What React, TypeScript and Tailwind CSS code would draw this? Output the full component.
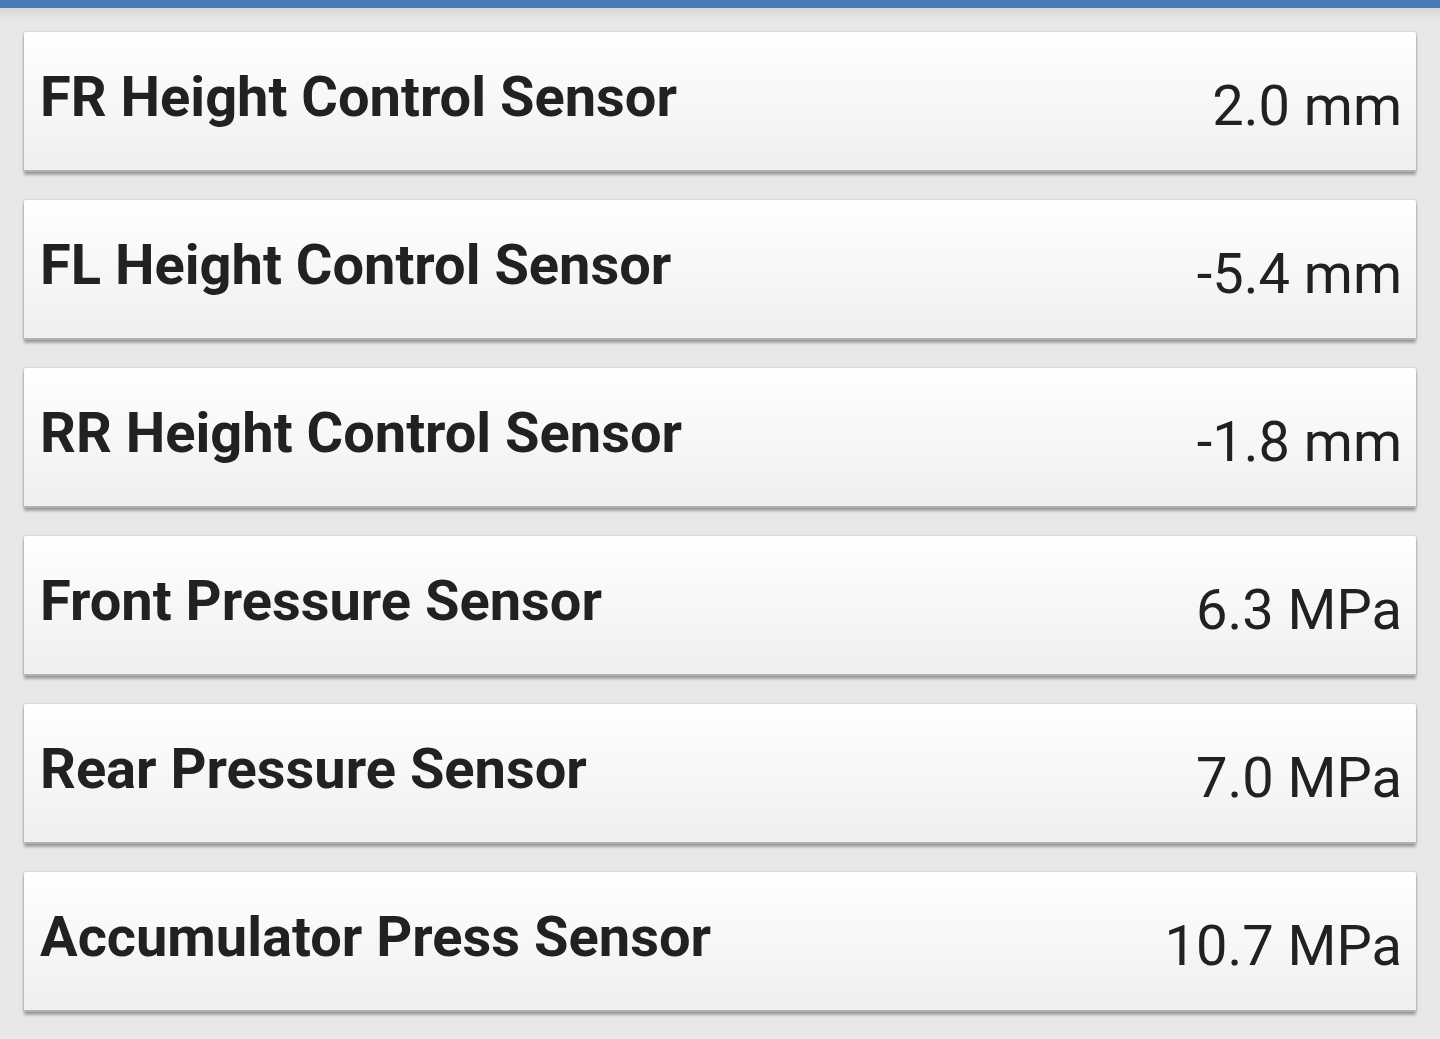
const rows = [
  { label: "FR Height Control Sensor", value: "2.0 mm" },
  { label: "FL Height Control Sensor", value: "-5.4 mm" },
  { label: "RR Height Control Sensor", value: "-1.8 mm" },
  { label: "Front Pressure Sensor", value: "6.3 MPa" },
  { label: "Rear Pressure Sensor", value: "7.0 MPa" },
  { label: "Accumulator Press Sensor", value: "10.7 MPa" },
];

export default function App() {
  return (
    <div className="w-[1440px] h-[1039px] overflow-hidden bg-[#e8e8e8] font-['Roboto',sans-serif]">
      <div className="h-2 bg-[#4a7bb7]" />
      <div className="h-3 bg-gradient-to-b from-[#d6d6d6] to-[#e8e8e8]" />
      <div className="flex flex-col gap-[28px] px-6 pt-3">
        {rows.map((row) => (
          <div
            key={row.label}
            className="h-[140px] flex items-center justify-between pl-4 pr-[14px] rounded-[2px] bg-gradient-to-b from-white to-[#efefef] shadow-[0_3px_3px_rgba(0,0,0,0.3),-1px_0_2px_rgba(0,0,0,0.12),1px_0_2px_rgba(0,0,0,0.12)] border-b-2 border-[#b0b0b0]"
          >
            <span className="text-[56px] font-bold text-[#212121] leading-none -mt-2">
              {row.label}
            </span>
            <span className="text-[56px] text-[#212121] leading-none mt-[10px]">
              {row.value}
            </span>
          </div>
        ))}
      </div>
    </div>
  );
}
